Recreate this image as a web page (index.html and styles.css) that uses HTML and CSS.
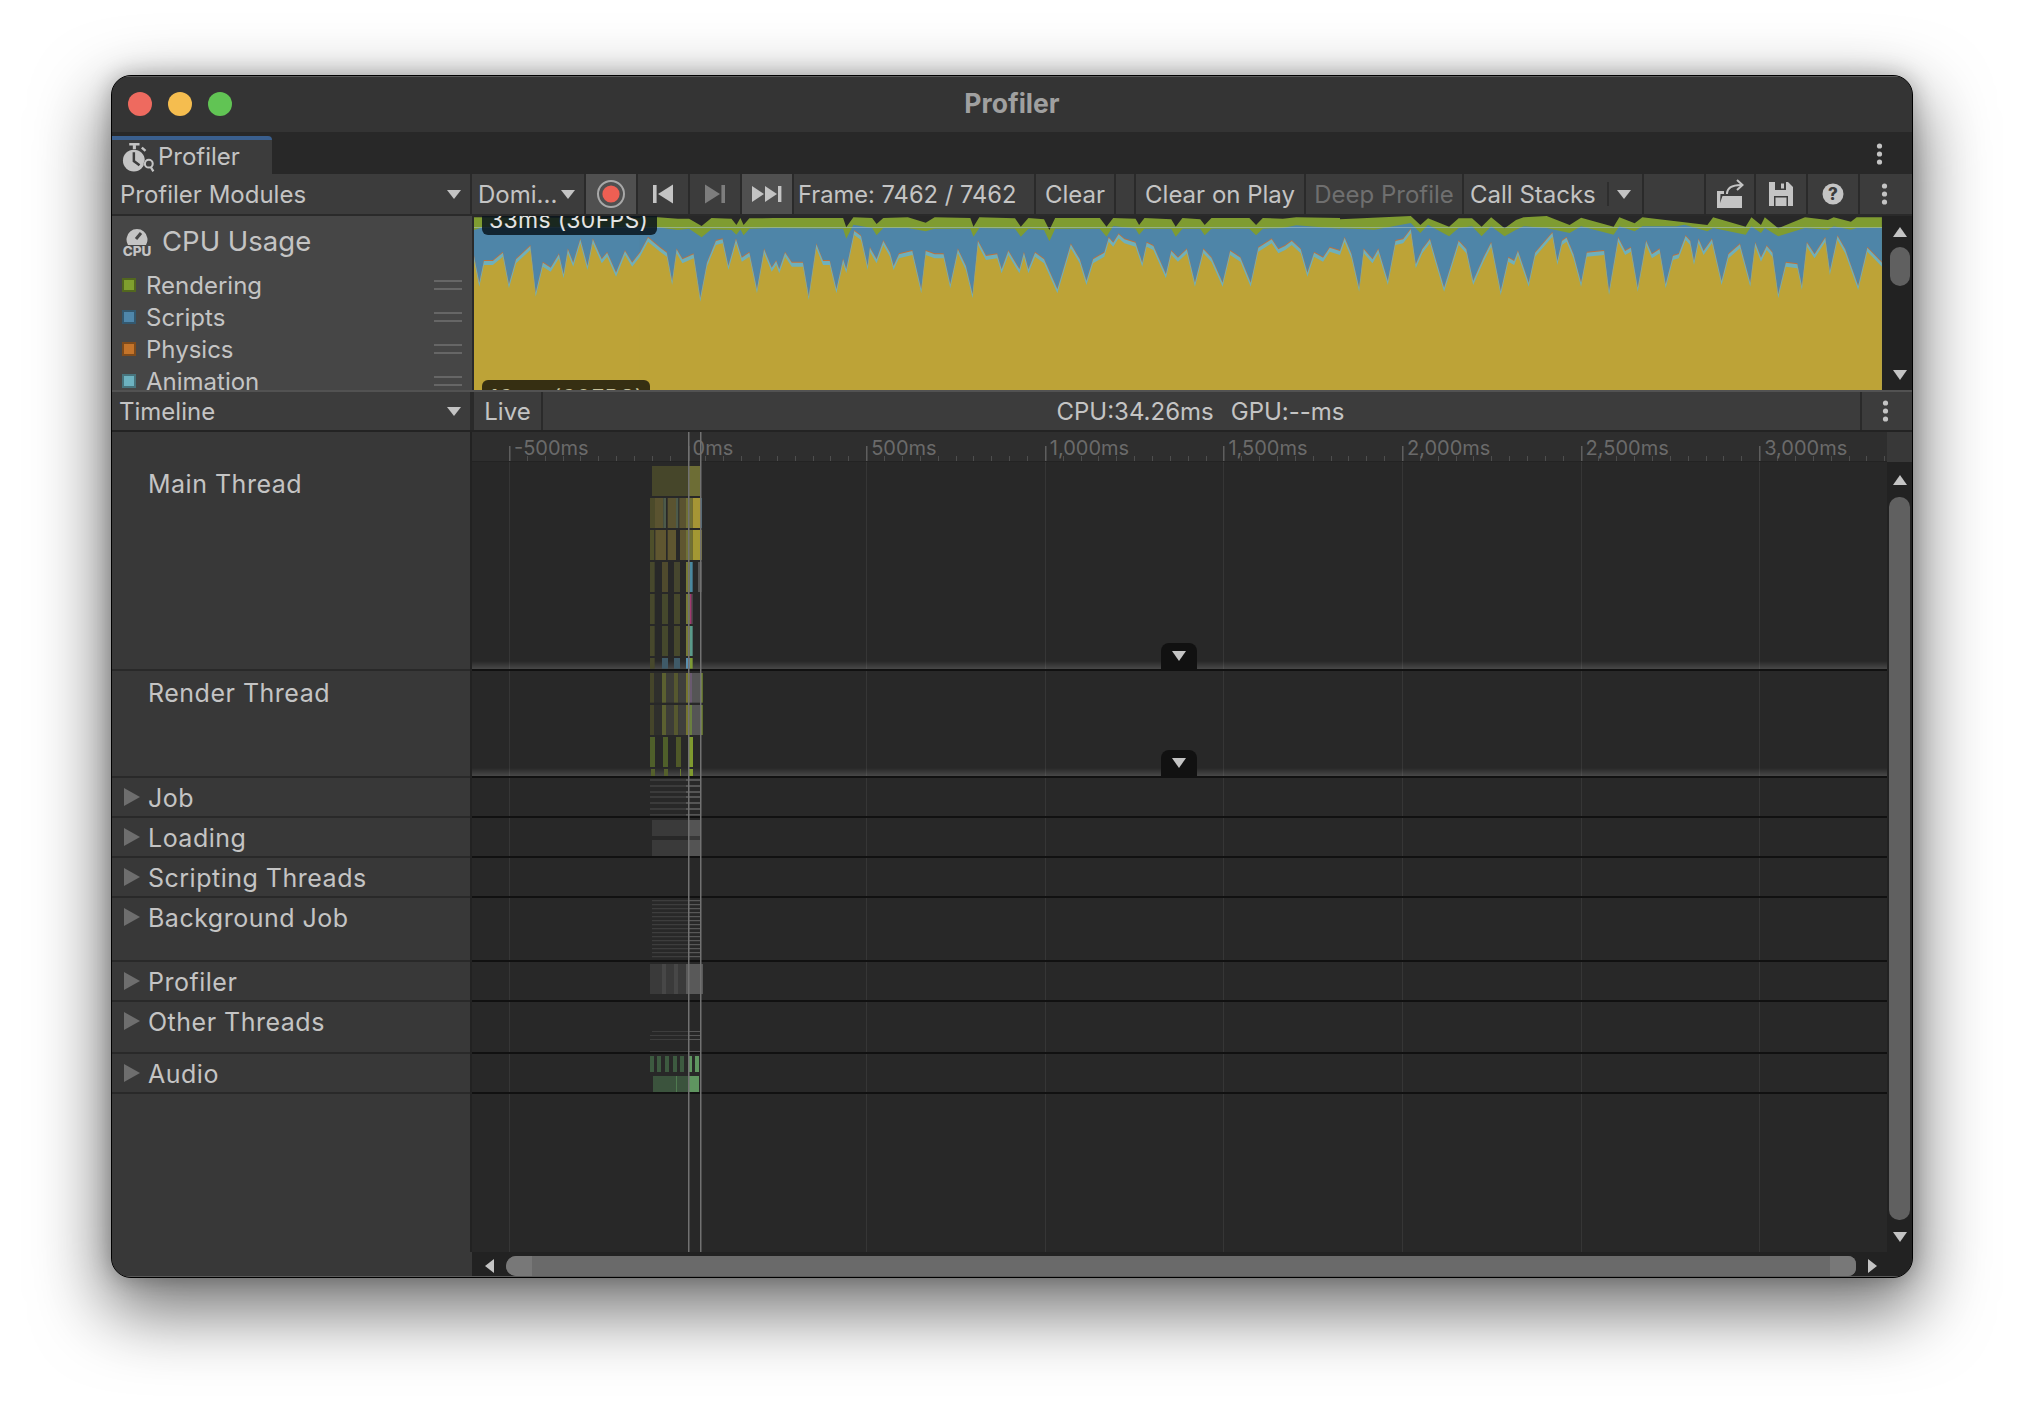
FILE: index.html
```html
<!DOCTYPE html>
<html lang="en">
<head>
  <meta charset="UTF-8" />
  <title>Profiler</title>
  <link rel="stylesheet" href="styles.css">
</head>
<body>
  <svg class="defs" width="0" height="0">
    <symbol id="kebab" viewBox="0 0 6 24"><circle cx="3" cy="4" r="2.6"/><circle cx="3" cy="12" r="2.6"/><circle cx="3" cy="20" r="2.6"/></symbol>
  </svg>

  <div class="window">
    <div class="titlebar">
      <span class="light red"></span>
      <span class="light yellow"></span>
      <span class="light green"></span>
      <span class="title">Profiler</span>
    </div>

    <div class="tabstrip">
      <div class="tab">
        <svg class="tab-icon" viewBox="0 0 32 30">
          <rect x="7" y="0" width="10" height="2.4" fill="#c4c4c4"/>
          <rect x="10.5" y="2" width="3" height="4" fill="#c4c4c4"/>
          <path d="M20 3.5l3.6 3.2-1.6 1.8-3.6-3.2z" fill="#c4c4c4"/>
          <circle cx="11.5" cy="17" r="10.6" fill="#c4c4c4"/>
          <path d="M11.5 9v8.5l5.5 4" fill="none" stroke="#3c3c3c" stroke-width="2.4"/>
          <circle cx="26" cy="20" r="5" fill="#3c3c3c"/>
          <circle cx="26" cy="20" r="3.8" fill="none" stroke="#c4c4c4" stroke-width="2"/>
          <path d="M28 23.5l2.4 4" stroke="#c4c4c4" stroke-width="2.2"/>
        </svg>
        <span>Profiler</span>
      </div>
      <svg class="kebab strip-kebab"><use href="#kebab"/></svg>
    </div>

    <div class="toolbar">
      <div class="btn btn-modules"><span>Profiler Modules</span><i class="caret"></i></div>
      <div class="btn btn-target"><span>Domi...</span><i class="caret"></i></div>
      <div class="btn btn-icon on">
        <svg width="30" height="30" viewBox="0 0 30 30"><circle cx="15" cy="15" r="13" fill="none" stroke="#a8a8a8" stroke-width="2"/><circle cx="15" cy="15" r="8.6" fill="#ee5f53"/></svg>
      </div>
      <div class="btn btn-icon">
        <svg width="20" height="20" viewBox="0 0 20 20" fill="#c4c4c4"><rect x="0" y="1" width="3.6" height="18"/><path d="M20 0.5v19L5 10z"/></svg>
      </div>
      <div class="btn btn-icon">
        <svg width="20" height="20" viewBox="0 0 20 20" fill="#7d7d7d"><rect x="16.4" y="1" width="3.6" height="18"/><path d="M0 0.5v19L15 10z"/></svg>
      </div>
      <div class="btn btn-icon on">
        <svg width="30" height="20" viewBox="0 0 30 20" fill="#c4c4c4"><path d="M0 2v16l12-8z"/><path d="M13 2v16l12-8z"/><rect x="26" y="2" width="3.4" height="16"/></svg>
      </div>
      <div class="btn btn-frame">Frame: 7462 / 7462</div>
      <div class="btn btn-clear">Clear</div>
      <div class="btn btn-blank-s"></div>
      <div class="btn btn-play">Clear on Play</div>
      <div class="btn btn-deep">Deep Profile</div>
      <div class="btn btn-stacks"><span>Call Stacks</span><b class="stacks-sep"></b><i class="caret"></i></div>
      <div class="btn btn-blank-m"></div>
      <div class="btn btn-open">
        <svg width="28" height="30" viewBox="0 0 28 30">
          <path d="M1 29V12h7v3H4.500L4 24 6.500 17H26v12z" fill="#c4c4c4"/>
          <path d="M11 15c0-6 4-9 14-9" fill="none" stroke="#c4c4c4" stroke-width="2"/>
          <path d="M21 1l5.500 5-5.500 5" fill="none" stroke="#c4c4c4" stroke-width="2"/>
        </svg>
      </div>
      <div class="btn btn-icon">
        <svg width="24" height="24" viewBox="0 0 24 24"><path d="M0 0h19l5 5v19H0z" fill="#c4c4c4"/><rect x="6" y="0" width="11" height="8" fill="#3c3c3c"/><rect x="12" y="1.500" width="3" height="5" fill="#c4c4c4"/><rect x="5" y="14" width="14" height="10" fill="#3c3c3c"/><rect x="6.500" y="15.500" width="11" height="8.500" fill="#c4c4c4"/></svg>
      </div>
      <div class="btn btn-icon">
        <svg width="22" height="22" viewBox="0 0 22 22"><circle cx="11" cy="11" r="10.500" fill="#c4c4c4"/><text x="11" y="17" class="help-mark">?</text></svg>
      </div>
      <div class="btn btn-menu"><svg class="kebab"><use href="#kebab"/></svg></div>
    </div>

    <div class="overview">
      <div class="modules">
        <div class="module-head">
          <span class="cpu-icon">
            <svg width="24" height="20" viewBox="0 0 24 20"><path d="M3 19a10.500 10.500 0 1 1 18 0z" fill="#c4c4c4"/><path d="M11 13l5-6" stroke="#464646" stroke-width="3"/></svg>
            <b>CPU</b>
          </span>
          <span class="module-title">CPU Usage</span>
        </div>
        <div class="module-item"><i class="swatch sw-rendering"></i><span>Rendering</span><b class="handle"></b></div>
        <div class="module-item"><i class="swatch sw-scripts"></i><span>Scripts</span><b class="handle"></b></div>
        <div class="module-item"><i class="swatch sw-physics"></i><span>Physics</span><b class="handle"></b></div>
        <div class="module-item"><i class="swatch sw-animation"></i><span>Animation</span><b class="handle"></b></div>
      </div>

      <div class="chart">
        <svg class="chart-svg" width="1408" height="174" viewBox="474 216 1408 174">
          <defs>
            <polygon id="yellow-a" points="1047,570 1062,650 1075,585 1100,585 1128,560 1145,655 1165,580 1205,540 1220,680 1240,590 1262,605 1285,565 1298,625 1310,550 1325,590 1345,520 1365,600 1380,520 1405,580 1420,560 1445,620 1470,555 1490,590 1512,560 1512,960 1047,960"/>
            <polygon id="yellow-b" points="0,380 18,335 45,365 60,380 72,465 82,370 95,400 120,385 135,515 150,410 170,345 185,340 198,420 215,340 228,395 245,380 262,490 278,370 295,425 305,405 312,430 325,380 340,410 365,410 378,510 395,355 410,405 425,405 440,490 455,400 462,430 480,315 495,330 510,420 515,365 530,400 545,345 560,380 568,420 580,385 610,375 630,490 640,375 660,385 680,385 695,475 712,370 730,420 745,505 757,345 775,390 800,385 810,430 825,375 850,430 860,380 870,430 885,380 905,400 915,430 935,490 965,355 985,400 1000,465 1015,400 1040,380 1050,335 1060,350 1072,325 1085,340 1110,350 1125,410 1135,350 1150,360 1178,445 1190,375 1205,395 1225,370 1243,470 1262,370 1280,395 1305,470 1322,375 1345,395 1368,470 1385,365 1415,340 1430,370 1445,360 1460,345 1480,370 1495,440 1510,380 1530,395 1545,365 1568,375 1568,780 0,780"/>
            <polygon id="yellow-c" points="0,375 12,335 30,385 50,485 62,370 85,400 100,370 125,465 145,345 165,340 185,310 198,415 215,370 235,340 250,400 272,485 310,345 330,370 348,465 375,395 395,350 420,495 440,395 455,405 465,375 493,470 510,380 555,320 568,405 580,345 592,335 610,385 630,470 645,380 690,375 703,495 727,335 745,375 760,365 778,485 800,345 815,385 835,370 851,475 870,390 885,385 903,330 915,345 925,405 937,340 950,375 972,340 997,465 1015,385 1045,355 1072,470 1085,350 1100,395 1115,360 1130,380 1145,505 1165,410 1195,415 1207,480 1220,350 1240,385 1268,335 1280,435 1300,330 1320,370 1354,480 1378,365 1416,410 1416,780 0,780"/>
          </defs>

          <g transform="translate(100 70) scale(.35714 .33333)">
            <polygon class="c-green" points="1047,442 1512,444 1512,960 1047,960"/>
            <polygon class="c-blue" points="1047,480 1075,470 1512,470 1512,960 1047,960"/>
            <use href="#yellow-a" class="c-orange" y="-15"/>
            <use href="#yellow-a" class="c-teal" y="-12"/>
            <use href="#yellow-a" class="c-yellow"/>
          </g>
          <g transform="translate(640 130) scale(.44643 .33333)">
            <polygon class="c-green" points="0,262 40,262 85,266 110,266 138,288 160,264 205,266 216,285 225,264 232,285 245,265 300,264 455,264 462,292 478,262 520,264 530,282 545,264 600,262 640,278 660,262 740,264 747,290 760,262 840,265 853,290 870,264 905,268 917,300 930,264 1030,264 1045,290 1060,264 1110,266 1118,285 1130,264 1190,268 1200,290 1215,264 1255,268 1265,285 1280,264 1365,264 1380,285 1395,264 1440,266 1470,262 1568,264 1568,780 0,780"/>
            <polygon class="c-blue" points="0,294 40,292 85,300 110,296 138,322 160,298 205,300 216,314 225,298 232,316 245,296 300,294 455,296 462,326 478,284 520,294 530,316 545,294 600,294 640,304 660,296 740,296 747,320 760,294 840,296 853,320 870,296 905,300 917,334 930,296 1030,296 1045,320 1060,288 1110,296 1118,314 1130,296 1190,296 1200,320 1215,296 1255,296 1265,316 1280,296 1365,296 1380,316 1395,296 1440,294 1470,286 1568,296 1568,780 0,780"/>
            <use href="#yellow-b" class="c-orange" y="-15"/>
            <use href="#yellow-b" class="c-teal" y="-12"/>
            <use href="#yellow-b" class="c-yellow"/>
          </g>
          <g transform="translate(1340 130) scale(.3827 .33333)">
            <polygon class="c-green" points="0,268 185,258 210,285 230,265 285,290 310,265 345,265 370,290 395,262 430,295 460,270 480,262 540,258 600,285 630,263 715,290 730,262 770,280 790,262 960,285 975,262 1060,290 1075,262 1100,285 1110,262 1145,295 1215,262 1275,270 1290,262 1335,275 1350,262 1416,262 1416,780 0,780"/>
            <polygon class="c-blue" points="0,294 90,299 185,279 210,309 230,284 285,319 310,294 345,289 370,319 395,289 430,319 460,299 480,289 540,294 600,309 630,289 715,314 730,289 770,304 790,289 880,289 900,284 960,304 975,294 1060,314 1075,289 1100,309 1110,294 1145,319 1215,294 1275,299 1290,289 1335,299 1350,294 1416,294 1416,780 0,780"/>
            <use href="#yellow-c" class="c-orange" y="-15"/>
            <use href="#yellow-c" class="c-teal" y="-12"/>
            <use href="#yellow-c" class="c-yellow"/>
          </g>
          <rect x="474" y="227" width="1408" height="1" fill="#a9c4cc" opacity=".55"/>
        </svg>
        <div class="fps fps-33">33ms (30FPS)</div>
        <div class="fps fps-16">16ms (60FPS)</div>
      </div>

      <div class="chart-scroll">
        <i class="arrow arrow-up"></i>
        <i class="chart-thumb"></i>
        <i class="arrow arrow-down"></i>
      </div>
    </div>

    <div class="bar2">
      <div class="btn btn-view"><span>Timeline</span><i class="caret"></i></div>
      <div class="btn btn-live">Live</div>
      <div class="stats"><span>CPU:34.26ms</span><span>GPU:--ms</span></div>
      <div class="btn btn-menu2"><svg class="kebab"><use href="#kebab"/></svg></div>
    </div>

    <div class="timeline">
      <div class="tracks">
        <div class="track track-ruler">
          <div class="names"></div>
          <div class="ruler">
            <span class="tick">-500ms</span>
            <span class="tick">0ms</span>
            <span class="tick">500ms</span>
            <span class="tick">1,000ms</span>
            <span class="tick">1,500ms</span>
            <span class="tick">2,000ms</span>
            <span class="tick">2,500ms</span>
            <span class="tick">3,000ms</span>
          </div>
        </div>
        <div class="track track-main">
          <div class="names plain">Main Thread</div>
          <div class="lane tall"><div class="expand"><i class="arrow arrow-down"></i></div></div>
        </div>
        <div class="track track-render">
          <div class="names plain">Render Thread</div>
          <div class="lane tall"><div class="expand"><i class="arrow arrow-down"></i></div></div>
        </div>
        <div class="track track-s">
          <div class="names"><i class="fold"></i>Job</div>
          <div class="lane"></div>
        </div>
        <div class="track track-s">
          <div class="names"><i class="fold"></i>Loading</div>
          <div class="lane"></div>
        </div>
        <div class="track track-s">
          <div class="names"><i class="fold"></i>Scripting Threads</div>
          <div class="lane"></div>
        </div>
        <div class="track track-bg">
          <div class="names"><i class="fold"></i>Background Job</div>
          <div class="lane"></div>
        </div>
        <div class="track track-s">
          <div class="names"><i class="fold"></i>Profiler</div>
          <div class="lane"></div>
        </div>
        <div class="track track-other">
          <div class="names"><i class="fold"></i>Other Threads</div>
          <div class="lane"></div>
        </div>
        <div class="track track-s">
          <div class="names"><i class="fold"></i>Audio</div>
          <div class="lane"></div>
        </div>
        <div class="track track-rest">
          <div class="names"></div>
          <div class="lane"></div>
        </div>

        <svg class="flames" width="120" height="820" viewBox="620 432 120 820">
          <defs>
            <pattern id="dim-lines" width="4" height="4" patternUnits="userSpaceOnUse"><rect width="4" height="1.200" fill="#3d3d3d"/></pattern>
            <pattern id="lit-lines" width="4" height="4" patternUnits="userSpaceOnUse"><rect width="4" height="1.200" fill="#585858"/></pattern>
          </defs>
          <g transform="translate(620 440) scale(.33333)">
            <rect x="96" y="78" width="108" height="90" fill="#46462a"/>
            <rect x="204" y="78" width="36" height="90" fill="#6d6d35"/>

            <rect x="90" y="174" width="15" height="90" fill="#4b4a2a"/>
            <rect x="105" y="174" width="25" height="90" fill="#5a5330"/>
            <rect x="130" y="174" width="8" height="90" fill="#4d5a4a"/>
            <rect x="143" y="174" width="25" height="90" fill="#5a5330"/>
            <rect x="168" y="174" width="7" height="90" fill="#4d5a4a"/>
            <rect x="178" y="174" width="20" height="90" fill="#5a5330"/>
            <rect x="198" y="174" width="20" height="90" fill="#6f7035"/>
            <rect x="218" y="174" width="22" height="90" fill="#a59535"/>
            <rect x="240" y="174" width="5" height="90" fill="#4f86a8"/>

            <rect x="90" y="270" width="13" height="90" fill="#4e4f2a"/>
            <rect x="106" y="270" width="32" height="90" fill="#5f5630"/>
            <rect x="143" y="270" width="25" height="90" fill="#5f5630"/>
            <rect x="180" y="270" width="18" height="90" fill="#5f5630"/>
            <rect x="198" y="270" width="20" height="90" fill="#6f7035"/>
            <rect x="218" y="270" width="27" height="90" fill="#a39833"/>

            <rect x="90" y="366" width="14" height="90" fill="#47482c"/>
            <rect x="126" y="366" width="18" height="90" fill="#4f4a2d"/>
            <rect x="162" y="366" width="18" height="90" fill="#46462e"/>
            <rect x="198" y="366" width="12" height="90" fill="#767a36"/>
            <rect x="210" y="366" width="8" height="90" fill="#4a88a0"/>
            <rect x="234" y="366" width="11" height="90" fill="#555555"/>

            <rect x="90" y="462" width="14" height="90" fill="#47482c"/>
            <rect x="126" y="462" width="18" height="90" fill="#45482c"/>
            <rect x="162" y="462" width="18" height="90" fill="#47482c"/>
            <rect x="198" y="462" width="12" height="90" fill="#767a36"/>
            <rect x="210" y="462" width="5" height="90" fill="#a03a70"/>
            <rect x="215" y="462" width="3" height="90" fill="#555555"/>

            <rect x="90" y="558" width="14" height="90" fill="#47482c"/>
            <rect x="126" y="558" width="18" height="90" fill="#45482c"/>
            <rect x="162" y="558" width="18" height="90" fill="#47482c"/>
            <rect x="198" y="558" width="12" height="90" fill="#767a36"/>
            <rect x="210" y="558" width="8" height="90" fill="#5a9a8a"/>

            <rect x="90" y="654" width="14" height="32" fill="#47482c"/>
            <rect x="126" y="654" width="18" height="32" fill="#3f5a68"/>
            <rect x="162" y="654" width="18" height="32" fill="#3f5a68"/>
            <rect x="198" y="654" width="12" height="32" fill="#5a90b0"/>
            <rect x="210" y="654" width="8" height="32" fill="#7d9a35"/>
          </g>

          <g transform="translate(620 690) scale(.33333)">
            <rect x="90" y="-51" width="12" height="89" fill="#45452a"/>
            <rect x="102" y="-51" width="24" height="89" fill="#2f2f2c"/>
            <rect x="126" y="-51" width="12" height="89" fill="#5b6030"/>
            <rect x="138" y="-51" width="24" height="89" fill="#3d3d37"/>
            <rect x="162" y="-51" width="13" height="89" fill="#56582f"/>
            <rect x="175" y="-51" width="23" height="89" fill="#3f3f3c"/>
            <rect x="198" y="-51" width="12" height="89" fill="#75752f"/>
            <rect x="210" y="-51" width="6" height="89" fill="#6a5a70"/>
            <rect x="216" y="-51" width="24" height="89" fill="#555555"/>
            <rect x="240" y="-51" width="8" height="89" fill="#7a9030"/>

            <rect x="90" y="45" width="12" height="90" fill="#45452a"/>
            <rect x="102" y="45" width="24" height="90" fill="#2f2f2c"/>
            <rect x="126" y="45" width="12" height="90" fill="#5b6030"/>
            <rect x="138" y="45" width="24" height="90" fill="#3d3d37"/>
            <rect x="162" y="45" width="13" height="90" fill="#56582f"/>
            <rect x="175" y="45" width="23" height="90" fill="#3f3f3c"/>
            <rect x="198" y="45" width="12" height="90" fill="#75752f"/>
            <rect x="210" y="45" width="6" height="90" fill="#6a8040"/>
            <rect x="216" y="45" width="24" height="90" fill="#555555"/>
            <rect x="240" y="45" width="8" height="90" fill="#7a9030"/>

            <rect x="90" y="141" width="15" height="90" fill="#4f5f2a"/>
            <rect x="129" y="141" width="15" height="90" fill="#4f5f2a"/>
            <rect x="168" y="141" width="15" height="90" fill="#4f5828"/>
            <rect x="204" y="141" width="15" height="90" fill="#7f9a2f"/>

            <rect x="93" y="237" width="12" height="21" fill="#55602c"/>
            <rect x="132" y="237" width="12" height="21" fill="#55602c"/>
            <rect x="180" y="237" width="3" height="21" fill="#6a7a30"/>
            <rect x="204" y="237" width="15" height="21" fill="#7f9a2f"/>

            <rect x="90" y="267" width="108" height="6" fill="#3b3b3b"/>
            <rect x="198" y="267" width="42" height="6" fill="#555555"/>
            <rect x="90" y="285" width="108" height="6" fill="#3b3b3b"/>
            <rect x="198" y="285" width="42" height="6" fill="#555555"/>
            <rect x="90" y="303" width="108" height="6" fill="#3b3b3b"/>
            <rect x="198" y="303" width="42" height="6" fill="#555555"/>
            <rect x="90" y="318" width="108" height="6" fill="#3b3b3b"/>
            <rect x="198" y="318" width="42" height="6" fill="#555555"/>
            <rect x="90" y="336" width="108" height="6" fill="#3b3b3b"/>
            <rect x="198" y="336" width="42" height="6" fill="#555555"/>
            <rect x="90" y="354" width="108" height="6" fill="#3b3b3b"/>
            <rect x="198" y="354" width="42" height="6" fill="#555555"/>
            <rect x="90" y="372" width="108" height="5" fill="#3b3b3b"/>
            <rect x="198" y="372" width="42" height="5" fill="#555555"/>

            <rect x="96" y="390" width="108" height="48" fill="#3a3a3a"/>
            <rect x="204" y="390" width="36" height="48" fill="#545454"/>
            <rect x="204" y="438" width="36" height="12" fill="#383838"/>
            <rect x="96" y="450" width="108" height="48" fill="#3a3a3a"/>
            <rect x="204" y="450" width="36" height="48" fill="#545454"/>
          </g>

          <rect x="652" y="899" width="36" height="61" fill="url(#dim-lines)"/>
          <rect x="688" y="899" width="12" height="61" fill="url(#lit-lines)"/>

          <g transform="translate(620 940) scale(.33333)">
            <rect x="90" y="72" width="36" height="90" fill="#3a3a3a"/>
            <rect x="126" y="72" width="12" height="90" fill="#474747"/>
            <rect x="138" y="72" width="24" height="90" fill="#3a3a3a"/>
            <rect x="162" y="72" width="12" height="90" fill="#474747"/>
            <rect x="174" y="72" width="24" height="90" fill="#3a3a3a"/>
            <rect x="198" y="72" width="51" height="90" fill="#595959"/>

            <rect x="96" y="273" width="108" height="3" fill="#3d3d3d"/>
            <rect x="204" y="273" width="36" height="3" fill="#585858"/>
            <rect x="90" y="285" width="114" height="3" fill="#3d3d3d"/>
            <rect x="204" y="285" width="36" height="3" fill="#585858"/>
            <rect x="90" y="297" width="114" height="3" fill="#3d3d3d"/>
            <rect x="204" y="297" width="36" height="3" fill="#585858"/>
            <rect x="90" y="333" width="114" height="3" fill="#3d3d3d"/>
            <rect x="204" y="333" width="36" height="3" fill="#585858"/>

            <rect x="90" y="348" width="12" height="48" fill="#3d5a40"/>
            <rect x="111" y="348" width="12" height="48" fill="#3d5a40"/>
            <rect x="135" y="348" width="12" height="48" fill="#3d5a40"/>
            <rect x="159" y="348" width="12" height="48" fill="#3d5a40"/>
            <rect x="180" y="348" width="12" height="48" fill="#3d5a40"/>
            <rect x="204" y="348" width="12" height="48" fill="#5f9560"/>
            <rect x="225" y="348" width="12" height="48" fill="#5f9560"/>
            <rect x="99" y="408" width="105" height="48" fill="#3b533d"/>
            <rect x="168" y="408" width="3" height="48" fill="#4f7a50"/>
            <rect x="204" y="408" width="33" height="48" fill="#5f9560"/>
          </g>

          <rect x="688" y="432" width="1.500" height="820" fill="#717171"/>
          <rect x="700" y="432" width="1.500" height="820" fill="#717171"/>
        </svg>
      </div>

      <div class="vscroll">
        <div class="vscroll-corner"></div>
        <i class="arrow arrow-up"></i>
        <i class="vthumb"></i>
        <i class="arrow arrow-down"></i>
      </div>
    </div>

    <div class="hscroll">
      <div class="hscroll-pad"></div>
      <div class="hscroll-bar">
        <i class="arrow arrow-left"></i>
        <div class="hthumb"><i class="cap"></i><i class="cap"></i></div>
        <i class="arrow arrow-right"></i>
      </div>
    </div>
  </div>
</body>
</html>
```

FILE: styles.css
```css
* {
  box-sizing: border-box;
}

html, body {
  margin: 0;
  padding: 0;
  background: #fff;
}

body {
  width: 2024px;
  height: 1426px;
  padding: 75px 111px 0 111px;
  overflow: hidden;
  font-family: Inter, "Liberation Sans", sans-serif;
  color: #c4c4c4;
}

.defs {
  position: absolute;
}

.window {
  display: flex;
  flex-direction: column;
  width: 1802px;
  height: 1203px;
  background: #383838;
  border: 1px solid #000;
  border-radius: 20px;
  overflow: hidden;
  box-shadow: 0 28px 70px 6px rgba(0, 0, 0, 0.55), 0 0 22px rgba(0, 0, 0, 0.25);
}

/* title bar */
.titlebar {
  position: relative;
  display: flex;
  align-items: center;
  flex: 0 0 56px;
  padding: 0 0 2px 16px;
  gap: 16px;
  background: #343434;
  border-top: 1px solid #5c5c5c;
}

.light {
  width: 24px;
  height: 24px;
  border-radius: 50%;
}

.red { background: #ee6a5f; }
.yellow { background: #f5bd4f; }
.green { background: #61c454; }

.title {
  position: absolute;
  left: 0;
  right: 0;
  margin-top: -2px;
  text-align: center;
  font-size: 26.500px;
  font-weight: 700;
  color: #a0a0a0;
}

/* tab strip */
.tabstrip {
  display: flex;
  align-items: flex-end;
  justify-content: space-between;
  flex: 0 0 42px;
  background: #282828;
}

.tab {
  display: flex;
  align-items: center;
  width: 160px;
  height: 38px;
  padding-left: 10px;
  gap: 3px;
  font-size: 24px;
  line-height: 30px;
  background: #3c3c3c;
  border-top: 4px solid #3a5f8e;
  border-top-right-radius: 4px;
}

.tab span {
  margin-top: -1px;
}

.tab-icon {
  width: 33px;
  height: 31px;
  margin-top: 2px;
}

.kebab {
  display: block;
  width: 7px;
  height: 24px;
  fill: #c4c4c4;
}

.strip-kebab {
  margin: 0 29px 8px 0;
}

/* toolbars */
.toolbar {
  display: flex;
  flex: 0 0 42px;
  gap: 2px;
  background: #2a2a2a;
  border-bottom: 2px solid #2a2a2a;
}

.btn {
  display: flex;
  align-items: center;
  height: 40px;
  font-size: 24px;
  white-space: nowrap;
  background: #3c3c3c;
}

.btn-icon {
  justify-content: center;
  width: 50px;
}

.on {
  background: #505050;
}

.caret {
  width: 0;
  height: 0;
  border-left: 7.5px solid transparent;
  border-right: 7.5px solid transparent;
  border-top: 9px solid #c4c4c4;
}

.btn-modules {
  justify-content: space-between;
  width: 358px;
  padding: 0 9px 0 8px;
}

.btn-target {
  justify-content: space-between;
  width: 112px;
  padding: 0 9px 0 6px;
}

.btn-frame {
  width: 240px;
  padding-left: 4px;
  font-size: 23.700px;
}

.btn-clear {
  justify-content: center;
  width: 78px;
}

.btn-blank-s {
  width: 18px;
}

.btn-play {
  justify-content: center;
  width: 168px;
}

.btn-deep {
  justify-content: center;
  width: 156px;
  color: #6f6f6f;
}

.btn-stacks {
  width: 178px;
  padding-left: 6px;
}

.stacks-sep {
  width: 2px;
  height: 24px;
  margin: 0 8px 0 11px;
  background: #2e2e2e;
}

.btn-blank-m {
  width: 60px;
}

.btn-open {
  justify-content: center;
  width: 48px;
}

.btn-menu, .btn-menu2 {
  justify-content: center;
  flex: 1;
  padding-right: 3px;
}

/* overview chart */
.overview {
  display: flex;
  flex: 0 0 174px;
  height: 174px;
  overflow: hidden;
  background: #2a2a2a;
}

.modules {
  flex: 0 0 360px;
  margin-right: 2px;
  padding: 0 10px;
  overflow: hidden;
  background: #464646;
}

.module-head {
  display: flex;
  align-items: center;
  height: 53px;
  gap: 10px;
  padding-bottom: 3px;
}

.cpu-icon {
  display: flex;
  flex-direction: column;
  align-items: center;
  width: 30px;
}

.cpu-icon b {
  margin-top: -1px;
  font-size: 13.500px;
  line-height: 12px;
  font-weight: 800;
}

.module-title {
  font-size: 27.500px;
  line-height: 34px;
}

.module-item {
  display: flex;
  align-items: center;
  height: 32px;
  font-size: 24px;
}

.swatch {
  width: 14px;
  height: 14px;
  margin-right: 10px;
  border: 2px solid rgba(0, 0, 0, 0.35);
}

.sw-rendering { background: #7f9f2e; }
.sw-scripts { background: #4f87ab; }
.sw-physics { background: #c4742a; }
.sw-animation { background: #6db2c0; }

.handle {
  width: 28px;
  height: 10px;
  margin-left: auto;
  border-top: 2px solid #666;
  border-bottom: 2px solid #666;
}

.chart {
  position: relative;
  flex: 0 0 1408px;
  overflow: hidden;
  background: #282828;
}

.chart-svg {
  display: block;
}

.c-green { fill: #7f9c31; }
.c-blue { fill: #4e85a8; }
.c-orange { fill: #c0703a; }
.c-teal { fill: #6fb0bb; }
.c-yellow { fill: #bda337; }

.fps {
  position: absolute;
  left: 8px;
  padding: 0 7px;
  font-size: 23px;
  line-height: 30px;
  letter-spacing: .3px;
  white-space: nowrap;
  border-radius: 6px;
}

.fps-33 {
  top: -11px;
  height: 30px;
  width: 175px;
  color: #e4e4e4;
  background: rgba(8, 20, 28, 0.85);
}

.fps-16 {
  top: 164px;
  height: 30px;
  width: 168px;
  line-height: 37px;
  color: #c8c29a;
  background: #362f12;
}

.chart-scroll {
  display: flex;
  flex-direction: column;
  align-items: center;
  flex: 1;
  padding: 11px 0 10px 6px;
  background: #222;
}

.arrow {
  display: block;
  width: 0;
  height: 0;
}

.arrow-up {
  border-left: 7.5px solid transparent;
  border-right: 7.5px solid transparent;
  border-bottom: 10px solid #c4c4c4;
}

.arrow-down {
  border-left: 7.5px solid transparent;
  border-right: 7.5px solid transparent;
  border-top: 10px solid #c4c4c4;
}

.arrow-left {
  border-top: 7px solid transparent;
  border-bottom: 7px solid transparent;
  border-right: 9px solid #c4c4c4;
}

.arrow-right {
  border-top: 7px solid transparent;
  border-bottom: 7px solid transparent;
  border-left: 9px solid #c4c4c4;
}

.chart-thumb {
  width: 20px;
  height: 39px;
  margin: 10px 0 auto;
  background: #606060;
  border-radius: 10px;
}

/* second bar */
.bar2 {
  display: flex;
  flex: 0 0 42px;
  gap: 2px;
  background: #2a2a2a;
  border-top: 2px solid #525252;
  border-bottom: 2px solid #232323;
}

.bar2 .btn {
  height: 38px;
}

.btn-view {
  justify-content: space-between;
  width: 358px;
  padding: 0 9px 0 7px;
}

.btn-live {
  width: 67px;
  margin-left: 2px;
  justify-content: center;
}

.stats {
  display: flex;
  align-items: center;
  justify-content: center;
  flex: 0 0 1317px;
  gap: 17px;
  padding-right: 2px;
  font-size: 24px;
  background: #3c3c3c;
}

/* timeline */
.timeline {
  display: flex;
  flex: 1;
  min-height: 0;
  background: #222;
}

.tracks {
  position: relative;
  display: flex;
  flex-direction: column;
  flex: 0 0 1775px;
  min-width: 0;
  overflow: hidden;
}

.track {
  display: flex;
  flex: 0 0 auto;
}

.track-ruler { height: 30px; }
.track-main { height: 209px; }
.track-render { height: 107px; }
.track-s { height: 40px; }
.track-bg { height: 64px; }
.track-other { height: 52px; }
.track-rest { flex: 1; }

.names {
  display: flex;
  align-items: flex-start;
  flex: 0 0 358px;
  padding: 5px 0 0 12px;
  font-size: 25px;
  line-height: 30px;
  letter-spacing: .5px;
  background: #383838;
  border-bottom: 2px solid #292929;
}

.track-ruler .names, .track-rest .names {
  border-bottom: 0;
}

.plain {
  padding: 7px 0 0 36px;
}

.fold {
  flex: 0 0 auto;
  width: 0;
  height: 0;
  margin: 5px 8px 0 0;
  border-top: 9px solid transparent;
  border-bottom: 9px solid transparent;
  border-left: 16px solid #6e6e6e;
}

.lane {
  position: relative;
  flex: 1;
  margin-left: 2px;
  background-color: #282828;
  background-image: repeating-linear-gradient(90deg, #363636 0, #363636 1px, transparent 1px, transparent 178.6px);
  background-position: 37px 0;
  border-bottom: 2px solid #111;
}

.track-rest .lane {
  border-bottom: 0;
}

.tall::after {
  content: "";
  position: absolute;
  left: 0;
  right: 0;
  bottom: 0;
  height: 8px;
  background: linear-gradient(rgba(255, 255, 255, 0), rgba(255, 255, 255, 0.15));
}

.ruler {
  display: flex;
  flex: 1;
  min-width: 0;
  margin-left: 2px;
  padding-left: 37px;
  overflow: hidden;
  background-color: #2e2e2e;
  background-image: repeating-linear-gradient(90deg, #4e4e4e 0, #4e4e4e 1px, transparent 1px, transparent 17.86px);
  background-size: 100% 5px;
  background-repeat: no-repeat;
  background-position: 37px bottom;
  border-bottom: 1px solid #232323;
}

.tick {
  flex: 0 0 178.6px;
  padding: 1px 0 0 5px;
  font-size: 20px;
  line-height: 30px;
  color: #6a6a6a;
  background: linear-gradient(#5e5e5e, #5e5e5e) no-repeat 0 bottom / 1.5px 15px;
}

.flames {
  position: absolute;
  left: 508px;
  top: 0;
  pointer-events: none;
}

.expand {
  position: absolute;
  left: 689px;
  bottom: 0;
  z-index: 1;
  display: flex;
  align-items: center;
  justify-content: center;
  width: 36px;
  height: 26px;
  background: #111;
  border-radius: 8px 8px 0 0;
}

.vscroll {
  display: flex;
  flex-direction: column;
  align-items: center;
  flex: 1;
  padding-bottom: 10px;
}

.vscroll-corner {
  align-self: stretch;
  height: 30px;
  margin: 0 0 13px 0;
  background: #383838;
}

.vthumb {
  width: 21px;
  height: 723px;
  margin: 12px 0 auto;
  background: #606060;
  border-radius: 10px;
}

/* bottom scrollbar */
.hscroll {
  display: flex;
  flex: 0 0 25px;
  border-bottom: 1px solid #5a5a5a;
}

.hscroll-pad {
  flex: 0 0 360px;
  background: #383838;
}

.hscroll-bar {
  display: flex;
  align-items: center;
  flex: 1;
  padding: 3px 0 0 13px;
  background: #222;
}

.hthumb {
  display: flex;
  justify-content: space-between;
  width: 1350px;
  height: 20px;
  margin: 0 12px;
  background: #6a6a6a;
  border-radius: 10px 8px 8px 10px;
  overflow: hidden;
}

.cap {
  width: 26px;
  background: #787878;
}

.help-mark {
  font-family: Inter, "Liberation Sans", sans-serif;
  font-size: 17px;
  font-weight: 800;
  text-anchor: middle;
  fill: #3c3c3c;
}
```
